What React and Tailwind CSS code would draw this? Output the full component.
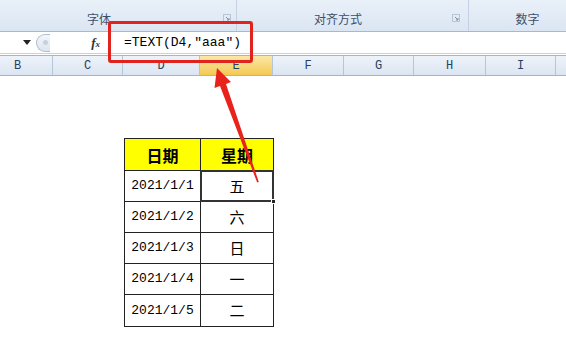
import React from 'react';

const cols = [
  { name: 'B', w: 53, pad: 'pr-[17px]' },
  { name: 'C', w: 70 },
  { name: 'D', w: 77 },
  { name: 'E', w: 73, active: true },
  { name: 'F', w: 71 },
  { name: 'G', w: 70 },
  { name: 'H', w: 72 },
  { name: 'I', w: 70 },
  { name: '', w: 20 },
];

const rows = [
  ['2021/1/1', '五'],
  ['2021/1/2', '六'],
  ['2021/1/3', '日'],
  ['2021/1/4', '一'],
  ['2021/1/5', '二'],
];

const cjk = { fontFamily: '"Noto Sans CJK SC", "Noto Sans", sans-serif' };
const mono = { fontFamily: '"Liberation Mono", "DejaVu Sans Mono", "Noto Sans CJK SC", monospace' };

const Launcher = () => (
  <svg width="8" height="8" viewBox="0 0 8 8" className="mt-[14px]">
    <rect x="0.5" y="0.5" width="7" height="7" fill="none" stroke="#b8c5d6" />
    <path d="M3 3 L6 6 M6 4 L6 6 L4 6" stroke="#7d90a8" fill="none" />
  </svg>
);

const App = () => {
  return (
    <div className="relative w-[566px] h-[346px] overflow-hidden bg-white">
      {/* ribbon group labels */}
      <div className="flex h-[31px] bg-gradient-to-b from-[#e9f0f8] to-[#dbe6f3] text-[12px] text-[#3b4f6b]" style={cjk}>
        <div className="flex w-[237px] items-start justify-end border-r border-[#c3d1e2] pr-[5px]">
          <span className="mr-[112px] mt-[10px]">字体</span>
          <Launcher />
        </div>
        <div className="flex w-[232px] items-start justify-end border-r border-[#c3d1e2] pr-[8px]">
          <span className="mr-[90px] mt-[10px]">对齐方式</span>
          <Launcher />
        </div>
        <div className="flex flex-1 justify-center pl-[20px] pt-[10px]">
          <span>数字</span>
        </div>
      </div>
      <div className="h-px bg-[#a7b9cf]" />

      {/* formula bar */}
      <div className="flex h-[22px] items-center border-b border-[#c5d2e2] bg-white">
        <div className="w-[36px] flex justify-end pr-[5px]">
          <svg width="8" height="5" viewBox="0 0 8 5">
            <path d="M0 0 H8 L4 5 Z" fill="#222" />
          </svg>
        </div>
        <div className="h-[18px] w-[14px] rounded-l-full border border-r-0 border-[#aebdd0] bg-gradient-to-b from-[#f4f7fb] to-[#dce4ee] flex items-center justify-center">
          <div className="h-[5px] w-[5px] rounded-full bg-[#c7d1de] ml-[3px]" />
        </div>
        <div className="w-[52px] flex justify-end pr-[2px]">
          <span className="text-[13px] italic font-bold text-[#333]" style={{ fontFamily: '"Liberation Serif", serif' }}>
            f<span className="text-[9px]">x</span>
          </span>
        </div>
        <div className="ml-[22px] text-[13px] text-black" style={mono}>
          =TEXT(D4,″aaa″)
        </div>
      </div>

      {/* column headers */}
      <div className="flex h-[21px] mt-[1px] border-y border-[#9eb6ce] bg-gradient-to-b from-[#eef3fa] to-[#dbe5f1]">
        {cols.map((c) => (
          <div
            key={c.name + c.w}
            className={`flex shrink-0 items-center justify-center border-r border-[#b5c6d9] text-[12px] text-[#27415f] ${c.pad || ''} ${
              c.active ? 'bg-gradient-to-b from-[#fbe7a6] to-[#f4c94f]' : ''
            }`}
            style={{ width: c.w, ...mono }}
          >
            {c.name}
          </div>
        ))}
      </div>

      {/* sheet */}
      <div className="pl-[124px] pt-[62px]">
        <div className="w-[150px] border border-[#222]">
          <div className="flex h-[32px] bg-[#ffff00] border-b border-[#222]">
            <div className="flex w-[76px] items-center justify-center border-r border-[#222] text-[16px] font-bold text-black" style={cjk}>
              日期
            </div>
            <div className="flex flex-1 items-center justify-center text-[16px] font-bold text-black" style={cjk}>
              星期
            </div>
          </div>
          {rows.map(([d, w], i) => (
            <div key={d} className={`flex h-[31px] ${i < rows.length - 1 ? 'border-b border-[#222]' : ''}`}>
              <div className="flex w-[76px] items-center justify-center border-r border-[#222] text-[13px] text-black" style={mono}>
                {d}
              </div>
              <div
                className={`relative flex flex-1 items-center justify-center text-[15px] text-black ${
                  i === 0 ? 'outline-2 outline-[#333] -outline-offset-1' : ''
                }`}
                style={cjk}
              >
                {w}
                {i === 0 && (
                  <div className="absolute -bottom-[3px] -right-[3px] h-[5px] w-[5px] border border-white bg-[#222]" />
                )}
              </div>
            </div>
          ))}
        </div>
      </div>

      {/* callout */}
      <div className="absolute left-[108px] top-[21px] h-[42px] w-[145px] rounded-[3px] border-[3px] border-[#e0231c]" />
      <svg className="absolute left-0 top-0" width="566" height="346" viewBox="0 0 566 346">
        <polygon
          points="217,68 231,82 226,84 258.8,182 257.2,182.6 220,86 214.5,88"
          fill="#e8231c"
        />
      </svg>
    </div>
  );
};

export default App;
